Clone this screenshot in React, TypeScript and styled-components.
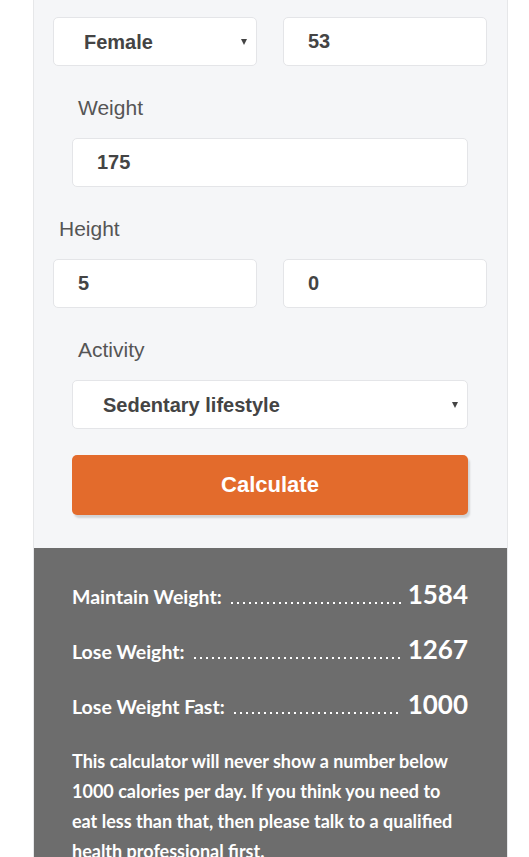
import React from 'react';
import styled, { createGlobalStyle } from 'styled-components';

const GlobalStyle = createGlobalStyle`
  html, body {
    margin: 0;
    padding: 0;
    background: #ffffff;
  }
  * {
    box-sizing: border-box;
  }
`;

const Page = styled.div`
  width: 529px;
  height: 857px;
  overflow: hidden;
  background: #ffffff;
`;

const Panel = styled.div`
  margin-left: 33px;
  width: 475px;
  border-left: 1px solid #e6e7e9;
  border-right: 1px solid #e6e7e9;
  background: #f5f6f8;
`;

const Form = styled.form`
  display: flex;
  flex-direction: column;
  padding: 17px 20px 33px 19px;
`;

const Row = styled.div`
  display: grid;
  grid-template-columns: 204px 204px;
  column-gap: 26px;
`;

const Group = styled.div<{ $inset?: boolean }>`
  display: flex;
  flex-direction: column;
  margin-top: 27px;
  padding: 0 ${(p) => (p.$inset ? '19px' : '0')};
`;

const Label = styled.label`
  display: block;
  margin: 0 0 15px 6px;
  font-family: 'Liberation Sans', Arial, sans-serif;
  font-size: 21px;
  line-height: 30px;
  color: #555555;
`;

const Field = styled.input`
  width: 100%;
  height: 49px;
  padding: 0 24px;
  border: 1px solid #e4e5e8;
  border-radius: 5px;
  background: #ffffff;
  font-family: 'Liberation Sans', Arial, sans-serif;
  font-weight: 700;
  font-size: 20px;
  color: #444444;
  outline: none;
`;

const SelectWrap = styled.div`
  position: relative;
  width: 100%;

  &::after {
    content: '';
    position: absolute;
    right: 10px;
    top: 22px;
    border-left: 3px solid transparent;
    border-right: 3px solid transparent;
    border-top: 6px solid #444444;
    pointer-events: none;
  }
`;

const Select = styled.select`
  appearance: none;
  -webkit-appearance: none;
  width: 100%;
  height: 49px;
  padding: 0 24px 0 30px;
  border: 1px solid #e4e5e8;
  border-radius: 5px;
  background: #ffffff;
  font-family: 'Liberation Sans', Arial, sans-serif;
  font-weight: 700;
  font-size: 20px;
  color: #444444;
  outline: none;
`;

const Button = styled.button`
  margin: 26px 19px 0;
  height: 60px;
  border: none;
  border-radius: 5px;
  background: #e36b2c;
  box-shadow: 2px 3px 2px rgba(0, 0, 0, 0.14);
  font-family: 'Liberation Sans', Arial, sans-serif;
  font-weight: 700;
  font-size: 22px;
  color: #ffffff;
  cursor: pointer;
`;

const Results = styled.div`
  background: #6d6d6d;
  padding: 31px 39px 0 38px;
  font-family: Lato, 'Open Sans', sans-serif;
  font-weight: 700;
  color: #ffffff;
`;

const ResultRow = styled.div`
  display: flex;
  align-items: baseline;
  height: 55px;
  line-height: 30px;
`;

const ResultLabel = styled.span`
  font-size: 19.5px;
  white-space: nowrap;
`;

// dot leader between a label and its value
const Leader = styled.span`
  flex: 1;
  height: 2px;
  margin: 0 6px 0 9px;
  background-image: linear-gradient(to right, #ffffff 2px, transparent 2px);
  background-size: 6px 2px;
  background-repeat: repeat-x;
`;

const ResultValue = styled.span`
  font-size: 26px;
`;

const Note = styled.p`
  margin: 2px 0 0;
  font-size: 18px;
  line-height: 30px;
`;

const results = [
  { label: 'Maintain Weight:', value: 1584 },
  { label: 'Lose Weight:', value: 1267 },
  { label: 'Lose Weight Fast:', value: 1000 },
];

const App: React.FC = () => {
  return (
    <Page>
      <GlobalStyle />
      <Panel>
        <Form onSubmit={(e) => e.preventDefault()}>
          <Row>
            <SelectWrap>
              <Select defaultValue="female">
                <option value="female">Female</option>
                <option value="male">Male</option>
              </Select>
            </SelectWrap>
            <Field defaultValue="53" />
          </Row>

          <Group $inset>
            <Label>Weight</Label>
            <Field defaultValue="175" />
          </Group>

          <Group>
            <Label>Height</Label>
            <Row>
              <Field defaultValue="5" />
              <Field defaultValue="0" />
            </Row>
          </Group>

          <Group $inset>
            <Label>Activity</Label>
            <SelectWrap>
              <Select defaultValue="sedentary">
                <option value="sedentary">Sedentary lifestyle</option>
                <option value="light">Lightly active</option>
                <option value="moderate">Moderately active</option>
                <option value="very">Very active</option>
              </Select>
            </SelectWrap>
          </Group>

          <Button type="submit">Calculate</Button>
        </Form>

        <Results>
          {results.map((r) => (
            <ResultRow key={r.label}>
              <ResultLabel>{r.label}</ResultLabel>
              <Leader />
              <ResultValue>{r.value}</ResultValue>
            </ResultRow>
          ))}
          <Note>
            This calculator will never show a number below 1000 calories per day. If you think
            you need to eat less than that, then please talk to a qualified health professional
            first.
          </Note>
        </Results>
      </Panel>
    </Page>
  );
};

export default App;
